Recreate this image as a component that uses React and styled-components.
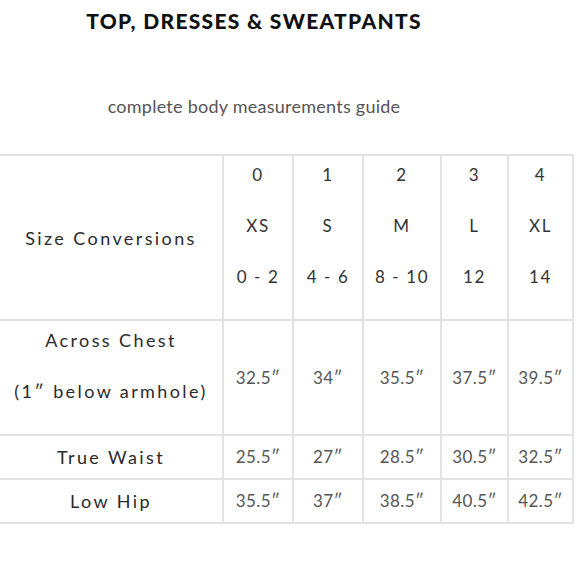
import React from "react";
import styled, { createGlobalStyle } from "styled-components";

const Global = createGlobalStyle`
  html, body { margin: 0; padding: 0; background: #fff; }
  body { font-family: "Lato", "Noto Sans", sans-serif; color: #222; }
`;

const Page = styled.div`
  width: 580px;
  height: 580px;
  overflow: hidden;
  display: flex;
  flex-direction: column;
`;

const Header = styled.div`
  width: 508px;
  display: flex;
  flex-direction: column;
  align-items: center;
`;

const Title = styled.h1`
  margin: 10px 0 0;
  font-family: "Lato", sans-serif;
  font-weight: 900;
  font-size: 21px;
  letter-spacing: 1.3px;
  line-height: 22px;
  color: #111;
`;

const Subtitle = styled.p`
  margin: 64px 0 0;
  font-family: "Lato", sans-serif;
  font-weight: 400;
  font-size: 18px;
  letter-spacing: 0.25px;
  line-height: 20px;
  color: #555;
`;

const Grid = styled.div`
  margin-top: 38px;
  width: 574px;
  display: grid;
  grid-template-columns: 222px 68px 68px 76px 65px 63px;
  grid-template-rows: 163px 113px 42px 42px;
  gap: 2px;
  padding: 2px 2px 2px 0;
  box-sizing: border-box;
  background: #e2e2e2;
`;

const Cell = styled.div`
  background: #fff;
  display: flex;
  flex-direction: column;
  align-items: center;
  justify-content: ${(p) => (p.$top ? "flex-start" : "center")};
  padding-top: ${(p) => (p.$top ? "9px" : "0")};
  gap: 31px;
  text-align: center;
  white-space: nowrap;
`;

const Label = styled.span`
  font-size: 18px;
  line-height: 20px;
  letter-spacing: 2.4px;
  color: #2a2a2a;
`;

const Value = styled.span`
  font-size: 17px;
  line-height: 20px;
  letter-spacing: ${(p) => (p.$dark ? "1.6px" : "0.4px")};
  color: ${(p) => (p.$dark ? "#333" : "#555")};
`;

const sizes = [
  ["0", "XS", "0 - 2"],
  ["1", "S", "4 - 6"],
  ["2", "M", "8 - 10"],
  ["3", "L", "12"],
  ["4", "XL", "14"],
];

const rows = [
  { label: ["Across Chest", "(1\u2033 below armhole)"], vals: ["32.5\u2033", "34\u2033", "35.5\u2033", "37.5\u2033", "39.5\u2033"] },
  { label: ["True Waist"], vals: ["25.5\u2033", "27\u2033", "28.5\u2033", "30.5\u2033", "32.5\u2033"] },
  { label: ["Low Hip"], vals: ["35.5\u2033", "37\u2033", "38.5\u2033", "40.5\u2033", "42.5\u2033"] },
];

export default function App() {
  return (
    <Page>
      <Global />
      <Header>
        <Title>TOP, DRESSES &amp; SWEATPANTS</Title>
        <Subtitle>complete body measurements guide</Subtitle>
      </Header>
      <Grid>
        <Cell>
          <Label>Size Conversions</Label>
        </Cell>
        {sizes.map((s) => (
          <Cell key={s[0]} $top>
            {s.map((t) => (
              <Value key={t} $dark>{t}</Value>
            ))}
          </Cell>
        ))}
        {rows.map((r) => (
          <React.Fragment key={r.label[0]}>
            <Cell $top={r.label.length > 1}>
              {r.label.map((l) => (
                <Label key={l}>{l}</Label>
              ))}
            </Cell>
            {r.vals.map((v, i) => (
              <Cell key={i}>
                <Value>{v}</Value>
              </Cell>
            ))}
          </React.Fragment>
        ))}
      </Grid>
    </Page>
  );
}
